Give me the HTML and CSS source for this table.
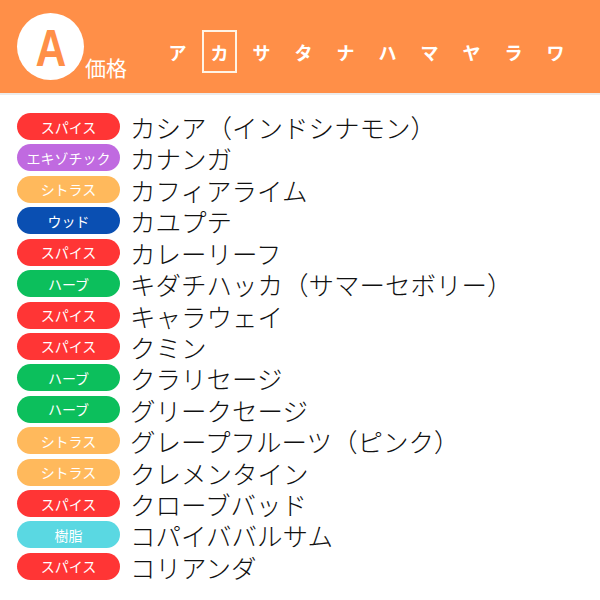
FILE: index.html
```html
<!DOCTYPE html>
<html lang="ja">
<head>
<meta charset="utf-8">
<link rel="stylesheet" href="styles.css">
</head>
<body>
<header class="header">
  <div class="brand">
    <div class="logo"><span class="logo-letter">A</span></div>
    <span class="brand-label">価格</span>
  </div>
  <nav class="nav">
    <span class="nav-item">ア</span>
    <span class="nav-item active">カ</span>
    <span class="nav-item">サ</span>
    <span class="nav-item">タ</span>
    <span class="nav-item">ナ</span>
    <span class="nav-item">ハ</span>
    <span class="nav-item">マ</span>
    <span class="nav-item">ヤ</span>
    <span class="nav-item">ラ</span>
    <span class="nav-item">ワ</span>
  </nav>
</header>
<ul class="list">
  <li class="row"><span class="tag spice">スパイス</span><span class="name">カシア（インドシナモン）</span></li>
  <li class="row"><span class="tag exotic">エキゾチック</span><span class="name">カナンガ</span></li>
  <li class="row"><span class="tag citrus">シトラス</span><span class="name">カフィアライム</span></li>
  <li class="row"><span class="tag wood">ウッド</span><span class="name">カユプテ</span></li>
  <li class="row"><span class="tag spice">スパイス</span><span class="name">カレーリーフ</span></li>
  <li class="row"><span class="tag herb">ハーブ</span><span class="name">キダチハッカ（サマーセボリー）</span></li>
  <li class="row"><span class="tag spice">スパイス</span><span class="name">キャラウェイ</span></li>
  <li class="row"><span class="tag spice">スパイス</span><span class="name">クミン</span></li>
  <li class="row"><span class="tag herb">ハーブ</span><span class="name">クラリセージ</span></li>
  <li class="row"><span class="tag herb">ハーブ</span><span class="name">グリークセージ</span></li>
  <li class="row"><span class="tag citrus">シトラス</span><span class="name">グレープフルーツ（ピンク）</span></li>
  <li class="row"><span class="tag citrus">シトラス</span><span class="name">クレメンタイン</span></li>
  <li class="row"><span class="tag spice">スパイス</span><span class="name">クローブバッド</span></li>
  <li class="row"><span class="tag resin">樹脂</span><span class="name">コパイババルサム</span></li>
  <li class="row"><span class="tag spice">スパイス</span><span class="name">コリアンダ</span></li>
</ul>
</body>
</html>
```
FILE: styles.css
```css
html, body {
  margin: 0;
  padding: 0;
  background: #ffffff;
  font-family: "Noto Sans CJK JP", "Noto Sans", sans-serif;
}

.header {
  height: 93px;
  background: #ff8f48;
  border-bottom: 2px solid #ececec;
  display: flex;
  align-items: center;
}

.brand {
  display: flex;
  align-items: flex-end;
  margin-left: 17px;
  width: 111px;
  flex-shrink: 0;
}

.logo {
  width: 67px;
  height: 67px;
  border-radius: 50%;
  background: #fff;
  display: flex;
  align-items: center;
  justify-content: center;
  flex-shrink: 0;
}

.logo-letter {
  color: #ff8f48;
  font-family: "Liberation Sans", Arial, sans-serif;
  font-weight: 700;
  font-size: 52px;
  line-height: 52px;
  transform: scaleX(0.82);
  margin-top: 2px;
}

.brand-label {
  color: #fff;
  font-size: 21px;
  line-height: 22px;
  margin-left: 1px;
  margin-bottom: 2px;
  white-space: nowrap;
}

.nav {
  display: flex;
  margin-left: 32px;
  margin-top: 10px;
  gap: 7px;
}

.nav-item {
  width: 35px;
  height: 43px;
  box-sizing: border-box;
  border: 2px solid transparent;
  display: flex;
  align-items: center;
  justify-content: center;
  color: #fff;
  font-size: 18px;
  font-weight: 700;
}

.nav-item.active {
  border-color: #fff4e6;
}

.list {
  list-style: none;
  margin: 0;
  padding: 18px 0 0 17px;
}

.row {
  height: 31.43px;
  display: flex;
  align-items: flex-start;
}

.tag {
  width: 103px;
  height: 27px;
  border-radius: 14px;
  display: flex;
  align-items: center;
  justify-content: center;
  color: #fff;
  font-size: 14px;
  line-height: 16px;
  flex-shrink: 0;
  white-space: nowrap;
}

.spice { background: #ff3535; }
.exotic { background: #c06ae0; }
.citrus { background: #ffb95c; }
.wood { background: #0a4fb2; }
.herb { background: #0cbf5c; }
.resin { background: #5ad8e2; }

.name {
  margin-left: 10px;
  font-size: 25.5px;
  line-height: 27px;
  font-weight: 300;
  color: #111;
  white-space: nowrap;
}
```
